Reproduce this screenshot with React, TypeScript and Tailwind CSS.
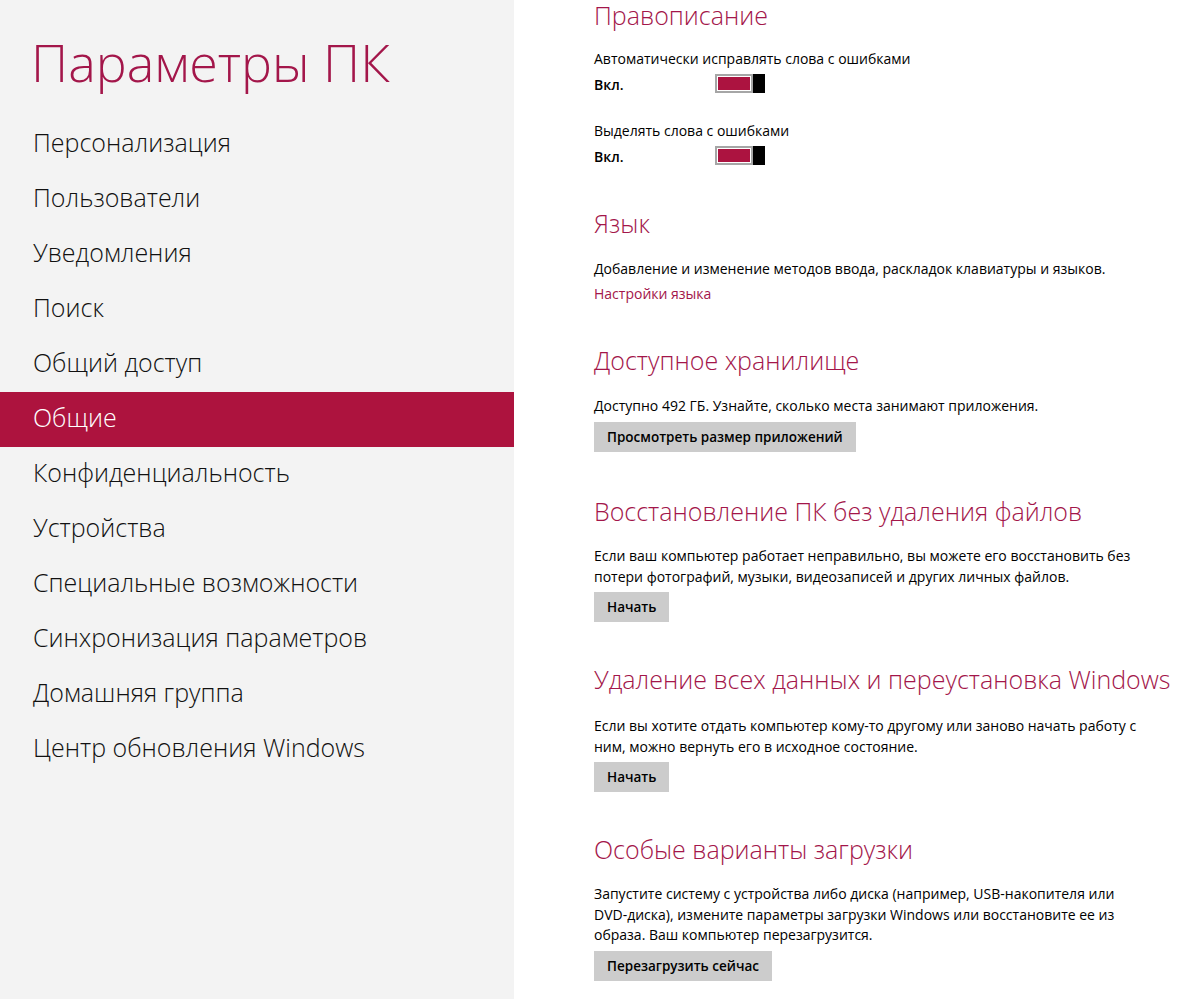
const menu = [
  "Персонализация",
  "Пользователи",
  "Уведомления",
  "Поиск",
  "Общий доступ",
  "Общие",
  "Конфиденциальность",
  "Устройства",
  "Специальные возможности",
  "Синхронизация параметров",
  "Домашняя группа",
  "Центр обновления Windows",
];

const Toggle = () => (
  <div className="flex h-[19px] w-[50px]">
    <div className="flex-1 border-2 border-[#a6a6a6] bg-white p-[1px]">
      <div className="h-full w-full bg-[#ac1340]" />
    </div>
    <div className="w-[12px] bg-black" />
  </div>
);

const Heading = ({ children, className = "" }: { children: React.ReactNode; className?: string }) => (
  <h2 className={`text-[25px] leading-[30px] font-light text-[#a3164a] ${className}`}>{children}</h2>
);

const Button = ({ children, className = "" }: { children: React.ReactNode; className?: string }) => (
  <button className={`block h-[30px] bg-[#cccccc] px-[13px] text-[13.5px] font-semibold text-black ${className}`}>
    {children}
  </button>
);

const SwitchRow = () => (
  <div className="mt-[5px] flex h-[19px] items-center">
    <span className="w-[121px] pt-[3px] leading-[16px] font-semibold">Вкл.</span>
    <Toggle />
  </div>
);

export default function App() {
  return (
    <div className="flex h-[999px] w-full bg-white text-black" style={{ fontFamily: '"Open Sans", "Noto Sans", sans-serif' }}>
      <aside className="h-full w-[514px] shrink-0 bg-[#f3f3f3]">
        <h1 className="pl-[31px] pt-[32px] text-[52px] leading-[60px] font-light text-[#a3164a]">Параметры ПК</h1>
        <nav className="mt-[25px] flex flex-col">
          {menu.map((item) => (
            <div
              key={item}
              className={`flex h-[55px] items-center pb-[3px] pl-[33px] text-[25px] font-light ${
                item === "Общие" ? "bg-[#ad133e] text-white" : "text-[#111]"
              }`}
            >
              {item}
            </div>
          ))}
        </nav>
      </aside>

      <main className="flex-1 pl-[80px] text-[14px] leading-[20px]">
        <Heading>Правописание</Heading>
        <p className="mt-[19px]">Автоматически исправлять слова с ошибками</p>
        <SwitchRow />
        <p className="mt-[28px]">Выделять слова с ошибками</p>
        <SwitchRow />

        <Heading className="mt-[43px]">Язык</Heading>
        <p className="mt-[21px]">Добавление и изменение методов ввода, раскладок клавиатуры и языков.</p>
        <p className="mt-[5px] text-[#a3164a]">Настройки языка</p>

        <Heading className="mt-[41px]">Доступное хранилище</Heading>
        <p className="mt-[21px]">Доступно 492 ГБ. Узнайте, сколько места занимают приложения.</p>
        <Button className="mt-[6px]">Просмотреть размер приложений</Button>

        <Heading className="mt-[44px]">Восстановление ПК без удаления файлов</Heading>
        <p className="mt-[19px] leading-[21px]">
          Если ваш компьютер работает неправильно, вы можете его восстановить без
          <br />
          потери фотографий, музыки, видеозаписей и других личных файлов.
        </p>
        <Button className="mt-[5px]">Начать</Button>

        <Heading className="mt-[42px]">Удаление всех данных и переустановка Windows</Heading>
        <p className="mt-[21px] leading-[21px]">
          Если вы хотите отдать компьютер кому-то другому или заново начать работу с
          <br />
          ним, можно вернуть его в исходное состояние.
        </p>
        <Button className="mt-[5px]">Начать</Button>

        <Heading className="mt-[42px]">Особые варианты загрузки</Heading>
        <p className="mt-[20px] leading-[20.5px]">
          Запустите систему с устройства либо диска (например, USB-накопителя или
          <br />
          DVD-диска), измените параметры загрузки Windows или восстановите ее из
          <br />
          образа. Ваш компьютер перезагрузится.
        </p>
        <Button className="mt-[5px]">Перезагрузить сейчас</Button>
      </main>
    </div>
  );
}
